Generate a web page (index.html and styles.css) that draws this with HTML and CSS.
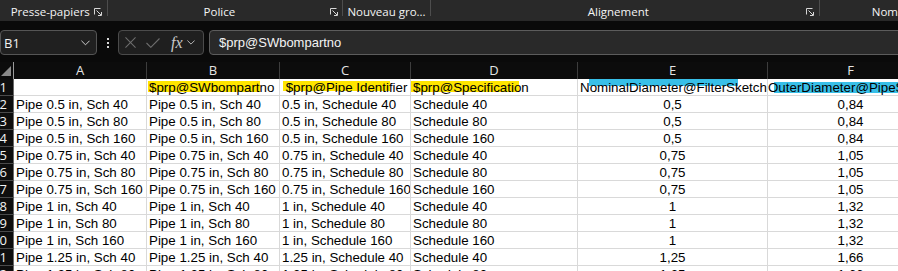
FILE: index.html
```html
<!DOCTYPE html>
<html lang="fr">
<head>
<meta charset="utf-8">
<title>Excel</title>
<link rel="stylesheet" href="styles.css">
</head>
<body>
<div class="ribbon">
  <div class="grp g1"><span class="lbl">Presse-papiers</span><svg class="launch" viewBox="0 0 8 8"><path d="M0.5 6.5V0.5H6.5M2.5 2.5L7 7M4 7.5H7.5V4" fill="none" stroke="#d6d6d6" stroke-width="1"/></svg></div>
  <div class="sep"></div>
  <div class="grp g2"><span class="lbl">Police</span><svg class="launch" viewBox="0 0 8 8"><path d="M0.5 6.5V0.5H6.5M2.5 2.5L7 7M4 7.5H7.5V4" fill="none" stroke="#d6d6d6" stroke-width="1"/></svg></div>
  <div class="sep"></div>
  <div class="grp g3"><span class="lbl">Nouveau gro...</span></div>
  <div class="sep"></div>
  <div class="grp g4"><span class="lbl">Alignement</span><svg class="launch" viewBox="0 0 8 8"><path d="M0.5 6.5V0.5H6.5M2.5 2.5L7 7M4 7.5H7.5V4" fill="none" stroke="#d6d6d6" stroke-width="1"/></svg></div>
  <div class="sep"></div>
  <div class="grp g5"><span class="lbl">Nom</span></div>
</div>

<div class="fbar">
  <div class="namebox"><span class="nb-text">B1</span><svg class="chev" viewBox="0 0 10 6"><path d="M0.5 0.5L5 5L9.5 0.5" fill="none" stroke="#d0d0d0" stroke-width="1.1"/></svg></div>
  <div class="dots"><i></i><i></i><i></i></div>
  <div class="fbtns">
    <svg class="ico-x" viewBox="0 0 12 12"><path d="M0.5 0.5L11.5 11.5M11.5 0.5L0.5 11.5" stroke="#6e6e6e" stroke-width="1.1" fill="none"/></svg>
    <svg class="ico-v" viewBox="0 0 14 10"><path d="M0.5 5L4.8 9.3L13.5 0.5" stroke="#6e6e6e" stroke-width="1.1" fill="none"/></svg>
    <span class="fx">fx</span>
    <svg class="chev2" viewBox="0 0 10 6"><path d="M0.5 0.5L5 5L9.5 0.5" fill="none" stroke="#c8c8c8" stroke-width="1.1"/></svg>
  </div>
  <div class="finput">$prp@SWbompartno</div>
</div>

<div class="sheet">
  <div class="grid">
    <div class="corner"><span class="tri"></span></div>
    <div class="ch">A</div><div class="ch">B</div><div class="ch">C</div><div class="ch">D</div><div class="ch">E</div><div class="ch">F</div>

    <div class="rh">1</div>
    <div class="c"></div>
    <div class="c hl-b">$prp@SWbompartno</div>
    <div class="c hl-c"> $prp@Pipe Identifier</div>
    <div class="c hl-d">$prp@Specification</div>
    <div class="c hl-e">NominalDiameter@FilterSketch</div>
    <div class="c hl-f nopad">OuterDiameter@PipeSketch</div>

    <div class="rh">2</div><div class="c">Pipe 0.5 in, Sch 40</div><div class="c">Pipe 0.5 in, Sch 40</div><div class="c">0.5 in, Schedule 40</div><div class="c">Schedule 40</div><div class="c num">0,5</div><div class="c num">0,84</div>
    <div class="rh">3</div><div class="c">Pipe 0.5 in, Sch 80</div><div class="c">Pipe 0.5 in, Sch 80</div><div class="c">0.5 in, Schedule 80</div><div class="c">Schedule 80</div><div class="c num">0,5</div><div class="c num">0,84</div>
    <div class="rh">4</div><div class="c">Pipe 0.5 in, Sch 160</div><div class="c">Pipe 0.5 in, Sch 160</div><div class="c">0.5 in, Schedule 160</div><div class="c">Schedule 160</div><div class="c num">0,5</div><div class="c num">0,84</div>
    <div class="rh">5</div><div class="c">Pipe 0.75 in, Sch 40</div><div class="c">Pipe 0.75 in, Sch 40</div><div class="c">0.75 in, Schedule 40</div><div class="c">Schedule 40</div><div class="c num">0,75</div><div class="c num">1,05</div>
    <div class="rh">6</div><div class="c">Pipe 0.75 in, Sch 80</div><div class="c">Pipe 0.75 in, Sch 80</div><div class="c">0.75 in, Schedule 80</div><div class="c">Schedule 80</div><div class="c num">0,75</div><div class="c num">1,05</div>
    <div class="rh">7</div><div class="c">Pipe 0.75 in, Sch 160</div><div class="c">Pipe 0.75 in, Sch 160</div><div class="c">0.75 in, Schedule 160</div><div class="c">Schedule 160</div><div class="c num">0,75</div><div class="c num">1,05</div>
    <div class="rh">8</div><div class="c">Pipe 1 in, Sch 40</div><div class="c">Pipe 1 in, Sch 40</div><div class="c">1 in, Schedule 40</div><div class="c">Schedule 40</div><div class="c num">1</div><div class="c num">1,32</div>
    <div class="rh">9</div><div class="c">Pipe 1 in, Sch 80</div><div class="c">Pipe 1 in, Sch 80</div><div class="c">1 in, Schedule 80</div><div class="c">Schedule 80</div><div class="c num">1</div><div class="c num">1,32</div>
    <div class="rh">10</div><div class="c">Pipe 1 in, Sch 160</div><div class="c">Pipe 1 in, Sch 160</div><div class="c">1 in, Schedule 160</div><div class="c">Schedule 160</div><div class="c num">1</div><div class="c num">1,32</div>
    <div class="rh">11</div><div class="c">Pipe 1.25 in, Sch 40</div><div class="c">Pipe 1.25 in, Sch 40</div><div class="c">1.25 in, Schedule 40</div><div class="c">Schedule 40</div><div class="c num">1,25</div><div class="c num">1,66</div>
    <div class="rh">12</div><div class="c">Pipe 1.25 in, Sch 80</div><div class="c">Pipe 1.25 in, Sch 80</div><div class="c">1.25 in, Schedule 80</div><div class="c">Schedule 80</div><div class="c num">1,25</div><div class="c num">1,66</div>
  </div>
</div>
</body>
</html>
```

FILE: styles.css
```css
* { box-sizing: border-box; }
html, body {
  margin: 0;
  padding: 0;
  background: #0a0a0a;
  overflow: hidden;
  width: 898px;
  height: 271px;
}
body {
  font-family: "Open Sans", "Noto Sans", sans-serif;
  color: #f2f2f2;
}

/* Ribbon */
.ribbon {
  display: flex;
  height: 21px;
  background: #292929;
  width: 898px;
  overflow: hidden;
}
.grp {
  display: flex;
  align-items: center;
  height: 21px;
  font-size: 11.5px;
  color: #f4f4f4;
  white-space: nowrap;
}
.grp .lbl { flex: 1; text-align: center; line-height: 21px; padding-top: 2px; }
.launch { width: 8px; height: 8px; flex: none; margin-top: 3px; }
.g1 { width: 108px; padding: 0 5px 0 6px; }
.g2 { width: 235px; padding: 0 4px 0 0; }
.g3 { width: 87px; }
.g4 { width: 390px; padding: 0 5px 0 0; }
.g5 { flex: 1; padding-left: 52px; }
.g5 .lbl { text-align: left; }
.sep { width: 1px; height: 16px; background: #4d4d4d; flex: none; }

/* Formula bar */
.fbar {
  display: flex;
  align-items: center;
  height: 27px;
  margin-top: 8px;
  width: 898px;
  overflow: hidden;
}
.namebox {
  width: 97px;
  height: 25px;
  border: 1px solid #555;
  border-radius: 4px;
  background: #202020;
  display: flex;
  align-items: center;
  padding: 0 6px 0 3px;
  flex: none;
}
.nb-text { flex: 1; font-size: 13px; color: #f0f0f0; }
.chev { width: 9px; height: 6px; }
.dots {
  width: 21px;
  flex: none;
  display: flex;
  flex-direction: column;
  align-items: center;
  gap: 2px;
}
.dots i { display: block; width: 2px; height: 2px; background: #d8d8d8; }
.fbtns {
  width: 86px;
  height: 25px;
  flex: none;
  border: 1px solid #4b4b4b;
  border-radius: 4px;
  background: #1f1f1f;
  display: flex;
  align-items: center;
  padding-left: 6px;
}
.ico-x { width: 11px; height: 11px; margin-right: 10px; }
.ico-v { width: 14px; height: 10px; margin-right: 11px; }
.fx {
  font-family: "Liberation Serif", "DejaVu Serif", serif;
  font-style: italic;
  font-size: 16px;
  color: #c9c9c9;
  margin-right: 4px;
  line-height: 16px;
}
.chev2 { width: 8px; height: 5px; }
.finput {
  flex: none;
  width: 700px;
  margin-left: 5px;
  height: 25px;
  border: 1px solid #5c5c5c;
  border-radius: 4px 0 0 4px;
  background: #292929;
  padding-left: 9px;
  font-family: "Liberation Sans", Arial, sans-serif;
  font-size: 13px;
  line-height: 23px;
  color: #f4f4f4;
}

/* Sheet */
.sheet {
  margin-top: 6px;
  width: 898px;
  overflow: hidden;
}
.grid {
  display: grid;
  grid-template-columns: 14px 133px 133px 131px 167px 190px 166px;
  grid-template-rows: 17px repeat(12, 17px);
  width: 934px;
}
.corner {
  background: #0c0c0c;
  border-right: 1px solid #9a9a9a;
  position: relative;
}
.tri {
  position: absolute;
  right: 2px;
  bottom: 3px;
  width: 0;
  height: 0;
  border-left: 10px solid transparent;
  border-bottom: 10px solid #8a8a8a;
}
.ch {
  background: #0c0c0c;
  border-right: 1px solid #3d3d3d;
  color: #e4e4e4;
  font-size: 13px;
  line-height: 17px;
  text-align: center;
  padding-top: 0;
}
.rh {
  background: #0e0e0e;
  border-right: 1px solid #6a6a6a;
  border-bottom: 1px solid #4a4a4a;
  color: #f2f2f2;
  font-size: 13px;
  line-height: 16px;
  text-align: right;
  padding-right: 6px;
  overflow: hidden;
  white-space: nowrap;
  direction: rtl;
}
.c {
  background-color: #fff;
  border-right: 1px solid #d9d9d9;
  border-bottom: 1px solid #d9d9d9;
  font-family: "Liberation Sans", Arial, sans-serif;
  font-size: 13.33px;
  line-height: 15px;
  padding: 1px 2px 0;
  color: #000;
  white-space: pre;
  overflow: hidden;
}
.c.nopad { padding-left: 0; }
.c.num { text-align: center; }
.hl-b { background-image: linear-gradient(#ffe500, #ffe500); background-repeat: no-repeat; background-position: 1px 2px; background-size: 112px 11px; }
.hl-c { background-image: linear-gradient(#ffe500, #ffe500); background-repeat: no-repeat; background-position: 3px 2px; background-size: 107px 10px; }
.hl-d { background-image: linear-gradient(#ffe500, #ffe500); background-repeat: no-repeat; background-position: 0 2px; background-size: 108px 11px; }
.hl-e { background-image: linear-gradient(#38bfe8, #38bfe8); background-repeat: no-repeat; background-position: 11px 0; background-size: 149px 7px; }
.hl-f { background-image: linear-gradient(#38bfe8, #38bfe8); background-repeat: no-repeat; background-position: 6px 3px; background-size: 160px 11px; }
```
